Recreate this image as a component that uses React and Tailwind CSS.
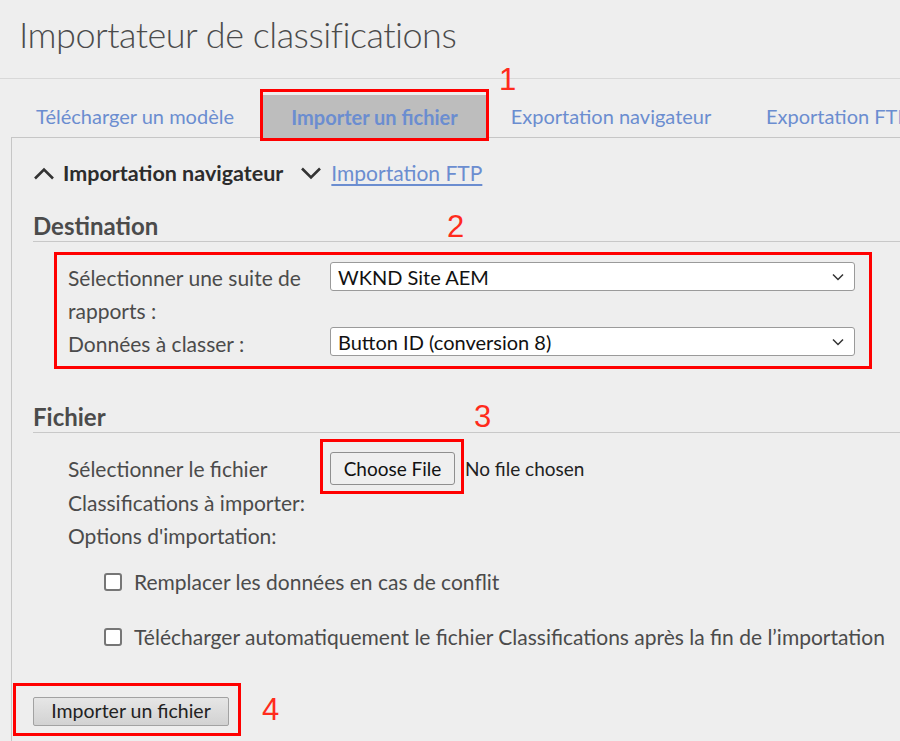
const font = { fontFamily: 'Lato, "Open Sans", sans-serif' }

function Chevron({ up }) {
  return (
    <svg width="22" height="13" viewBox="0 0 22 13" className="shrink-0">
      <path
        d={up ? 'M2 11.5 L11 2.5 L20 11.5' : 'M2 1.5 L11 10.5 L20 1.5'}
        fill="none"
        stroke="#333"
        strokeWidth="2.6"
      />
    </svg>
  )
}

function Select({ value }) {
  return (
    <div className="flex items-center justify-between h-[29px] bg-white border border-[#9a9a9a] rounded-[3px] pl-[7px] pr-[8px] text-[20px] text-[#111] leading-none">
      <span>{value}</span>
      <svg width="12" height="8" viewBox="0 0 12 8" className="mr-[2px]">
        <path d="M1 1.5 L6 6.5 L11 1.5" fill="none" stroke="#333" strokeWidth="1.5" />
      </svg>
    </div>
  )
}

function Checkbox({ label }) {
  return (
    <div className="flex items-center gap-[12px] h-[26px]">
      <span className="w-[18px] h-[18px] bg-white border-2 border-[#767676] rounded-[3px]" />
      <span className="text-[21px] text-[#4b4b4b]">{label}</span>
    </div>
  )
}

function Num({ children, className = '' }) {
  return (
    <span
      className={`text-[31px] leading-none text-[#ff2b1c] ${className}`}
      style={{ fontFamily: '"Liberation Sans", Arial, sans-serif' }}
    >
      {children}
    </span>
  )
}

export default function App() {
  return (
    <div className="w-[900px] h-[741px] overflow-hidden bg-[#eeeeee] relative" style={font}>
      {/* Title */}
      <div className="h-[79px] border-b border-[#d8d8d8] pl-[19px] pt-[12px]">
        <h1 className="text-[36px] font-light leading-[44px] text-[#4b4b4b] tracking-[-0.5px] whitespace-nowrap">
          Importateur de classifications
        </h1>
      </div>
      <Num className="absolute left-[499px] top-[64px]">1</Num>

      {/* Tabs */}
      <div className="flex items-end h-[58px] pl-[10px] text-[20px] text-[#6b8dd0] whitespace-nowrap">
        <div className="w-[250px] shrink-0 h-[43px] flex items-center justify-center">Télécharger un modèle</div>
        <div className="w-[229px] shrink-0 border-[3px] border-[#ff0000] pt-[3px] -mb-[4px] relative z-10">
          <div className="h-[43px] bg-[#bdbdbd] flex items-center justify-center font-bold">Importer un fichier</div>
        </div>
        <div className="w-[244px] shrink-0 h-[43px] flex items-center justify-center">Exportation navigateur</div>
        <div className="shrink-0 h-[43px] flex items-center pl-[33px]">Exportation FTP</div>
      </div>

      {/* Panel */}
      <div className="ml-[11px] border-l border-t border-[#c6c6c6] pl-[21px] pt-[21px] h-[610px]">
        <div className="flex items-center h-[28px] whitespace-nowrap">
          <Chevron up />
          <span className="ml-[8px] text-[21.5px] font-bold text-[#2c2c2c]">Importation navigateur</span>
          <span className="ml-[17px]"><Chevron /></span>
          <span className="ml-[9px] text-[21px] text-[#6b8dd0] underline underline-offset-[3px]">Importation FTP</span>
        </div>

        {/* Destination */}
        <div className="mt-[24px] h-[31px] border-b border-[#c8c8c8] flex items-center relative">
          <h2 className="text-[24px] font-bold text-[#4b4b4b] -mt-[1px]">Destination</h2>
          <Num className="absolute left-[414px] top-[0px]">2</Num>
        </div>
        <div className="mt-[10px] ml-[21px] w-[818px] border-[3px] border-[#ff0000] pl-[11px] pr-[14px] pt-[6px] pb-[6px]">
          <div className="grid grid-cols-[262px_1fr] text-[21px] text-[#4b4b4b] leading-[33px]">
            <div>Sélectionner une suite de<br />rapports :</div>
            <div className="pt-[1px]"><Select value="WKND Site AEM" /></div>
            <div>Données à classer :</div>
            <div><Select value="Button ID (conversion 8)" /></div>
          </div>
        </div>

        {/* Fichier */}
        <div className="mt-[33px] h-[31px] border-b border-[#c8c8c8] flex items-center relative">
          <h2 className="text-[24px] font-bold text-[#4b4b4b] -mt-[1px]">Fichier</h2>
          <Num className="absolute left-[441px] top-[-1px]">3</Num>
        </div>
        <div className="mt-[19px] grid grid-cols-[287px_1fr] text-[21px] text-[#4b4b4b] leading-[33.5px]">
          <div className="pl-[35px] whitespace-nowrap">
            <div>Sélectionner le fichier</div>
            <div>Classifications à importer:</div>
            <div>Options d'importation:</div>
          </div>
          <div className="flex items-start -mt-[13px]">
            <div className="border-[3px] border-[#ff0000] pl-[7px] pr-[6px] pt-[9px] pb-[6px]">
              <button className="h-[33px] w-[125px] bg-[#efefef] border border-[#8f8f8f] rounded-[3px] text-[19px] text-[#111] leading-none">
                Choose File
              </button>
            </div>
            <span className="ml-[1px] mt-[13px] text-[19px] text-[#222]">No file chosen</span>
          </div>
        </div>

        <div className="pl-[71px] mt-[16px] flex flex-col gap-[29px]">
          <Checkbox label="Remplacer les données en cas de conflit" />
          <Checkbox label="Télécharger automatiquement le fichier Classifications après la fin de l’importation" />
        </div>

        <div className="mt-[33px] -ml-[20px] flex items-center">
          <div className="border-[3px] border-[#ff0000] pl-[17px] pr-[9px] pt-[11px] pb-[7px]">
            <button className="h-[29px] w-[196px] bg-gradient-to-b from-[#e6e6e6] to-[#d2d2d2] border border-[#a2a2a2] rounded-[2px] text-[19.5px] text-[#222] leading-none">
              Importer un fichier
            </button>
          </div>
          <Num className="ml-[21px]">4</Num>
        </div>
      </div>
    </div>
  )
}
